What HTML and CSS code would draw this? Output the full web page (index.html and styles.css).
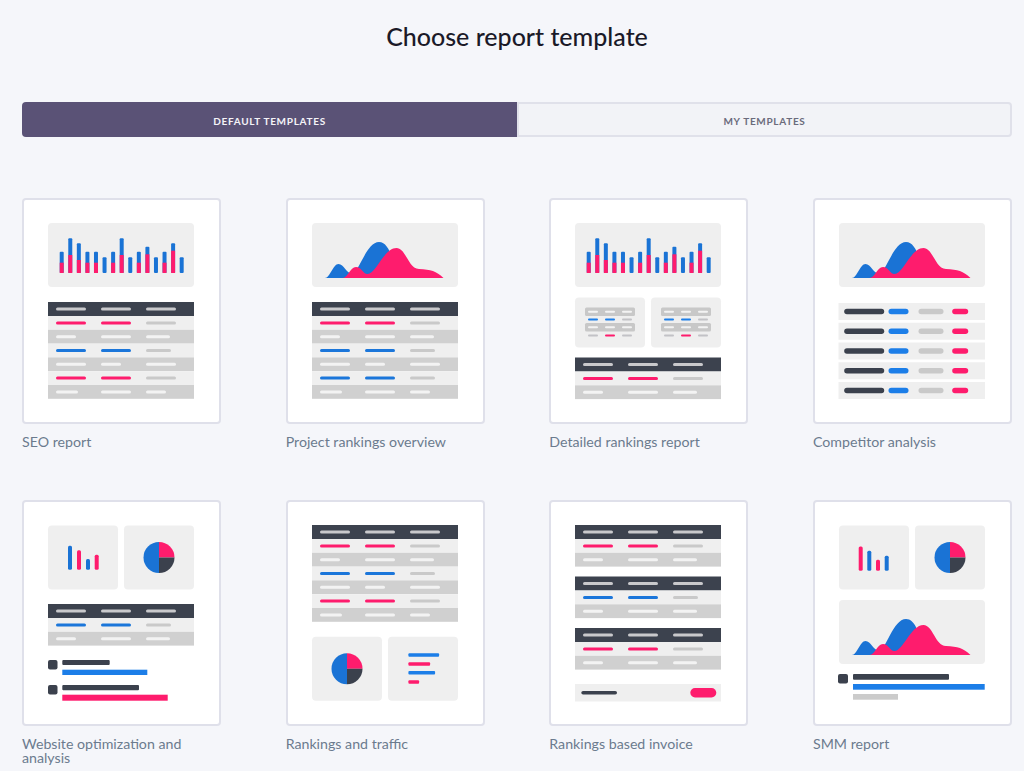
FILE: index.html
```html
<!DOCTYPE html>
<html lang="en">
<head>
<meta charset="utf-8">
<title>Choose report template</title>
<link rel="stylesheet" href="styles.css">
</head>
<body>
<svg class="defs" aria-hidden="true" width="0" height="0">
  <defs>
    <g id="hdr">
      <rect width="146" height="14" fill="#3c424e"/>
      <rect x="8" y="5.5" width="30" height="3" rx="1.5" fill="#c9c9cc"/>
      <rect x="53" y="5.5" width="30" height="3" rx="1.5" fill="#c9c9cc"/>
      <rect x="98" y="5.5" width="30" height="3" rx="1.5" fill="#c9c9cc"/>
    </g>
    <g id="rp">
      <rect width="146" height="13.8" fill="#efefef"/>
      <rect x="8" y="5.4" width="30" height="3" rx="1.5" fill="#fe1c6d"/>
      <rect x="53" y="5.4" width="30" height="3" rx="1.5" fill="#fe1c6d"/>
      <rect x="98" y="5.4" width="30" height="3" rx="1.5" fill="#c9c9c9"/>
    </g>
    <g id="rb">
      <rect width="146" height="13.8" fill="#efefef"/>
      <rect x="8" y="5.4" width="30" height="3" rx="1.5" fill="#1b76da"/>
      <rect x="53" y="5.4" width="30" height="3" rx="1.5" fill="#1b76da"/>
      <rect x="98" y="5.4" width="25" height="3" rx="1.5" fill="#c9c9c9"/>
    </g>
    <g id="rw1">
      <rect width="146" height="13.8" fill="#d0d0d0"/>
      <rect x="8" y="5.4" width="20" height="3" rx="1.5" fill="#f3f3f3"/>
      <rect x="53" y="5.4" width="30" height="3" rx="1.5" fill="#f3f3f3"/>
      <rect x="98" y="5.4" width="24" height="3" rx="1.5" fill="#f3f3f3"/>
    </g>
    <g id="rw2">
      <rect width="146" height="13.8" fill="#d0d0d0"/>
      <rect x="8" y="5.4" width="30" height="3" rx="1.5" fill="#f3f3f3"/>
      <rect x="53" y="5.4" width="20" height="3" rx="1.5" fill="#f3f3f3"/>
      <rect x="98" y="5.4" width="30" height="3" rx="1.5" fill="#f3f3f3"/>
    </g>
    <g id="rw3">
      <rect width="146" height="13.8" fill="#d0d0d0"/>
      <rect x="8" y="5.4" width="22" height="3" rx="1.5" fill="#f3f3f3"/>
      <rect x="53" y="5.4" width="30" height="3" rx="1.5" fill="#f3f3f3"/>
      <rect x="98" y="5.4" width="20" height="3" rx="1.5" fill="#f3f3f3"/>
    </g>
    <g id="bars">
      <rect x="26" y="25" width="146" height="64" rx="4" fill="#efefef"/>
      <g fill="#1a73d5">
        <rect x="37.7" y="53.7" width="4" height="21.3" rx="1"/>
        <rect x="46.27" y="40.3" width="4" height="34.7" rx="1"/>
        <rect x="54.84" y="45.3" width="4" height="29.7" rx="1"/>
        <rect x="63.41" y="53.7" width="4" height="21.3" rx="1"/>
        <rect x="71.98" y="53.7" width="4" height="21.3" rx="1"/>
        <rect x="80.55" y="59.3" width="4" height="15.7" rx="1"/>
        <rect x="89.12" y="53.7" width="4" height="21.3" rx="1"/>
        <rect x="97.69" y="40.3" width="4" height="34.7" rx="1"/>
        <rect x="106.26" y="59.3" width="4" height="15.7" rx="1"/>
        <rect x="114.83" y="53.7" width="4" height="21.3" rx="1"/>
        <rect x="123.4" y="48.7" width="4" height="26.3" rx="1"/>
        <rect x="131.97" y="59.3" width="4" height="15.7" rx="1"/>
        <rect x="140.54" y="53.7" width="4" height="21.3" rx="1"/>
        <rect x="149.11" y="45.3" width="4" height="29.7" rx="1"/>
        <rect x="157.68" y="59.3" width="4" height="15.7" rx="1"/>
      </g>
      <g fill="#fe1c6d">
        <rect x="37.7" y="64.7" width="4" height="10.3"/>
        <rect x="46.27" y="57" width="4" height="18"/>
        <rect x="54.84" y="62" width="4" height="13"/>
        <rect x="63.41" y="64.7" width="4" height="10.3"/>
        <rect x="71.98" y="64.7" width="4" height="10.3"/>
        <rect x="89.12" y="64.7" width="4" height="10.3"/>
        <rect x="97.69" y="57" width="4" height="18"/>
        <rect x="114.83" y="64.7" width="4" height="10.3"/>
        <rect x="123.4" y="56.3" width="4" height="18.7"/>
        <rect x="140.54" y="64.7" width="4" height="10.3"/>
        <rect x="149.11" y="52.7" width="4" height="22.3"/>
      </g>
    </g>
    <g id="area">
      <rect x="26" y="25" width="146" height="64" rx="4" fill="#efefef"/>
      <path d="M39,80 C44,80 47,66 52.5,66 C58,66 60,75.5 66,75.5 C73,75.5 80,44 93,44 C102,44 105,58 110,66 L113,80 Z" fill="#1a73d5"/>
      <path d="M56.5,80 C62,80 64,69 70,69 C75.5,69 77,76 81.5,76 C90,76 98,50 110.5,50 C120,50 122,70.5 133,71 C145,71.5 150,73 157.5,80 Z" fill="#fe1c6d"/>
    </g>
    <g id="pie">
      <path d="M0,-15.5 A15.5,15.5 0 0 0 0,15.5 Z" fill="#1a73d5"/>
      <path d="M0,0 L0,-15.5 A15.5,15.5 0 0 1 15.5,0 Z" fill="#fe1c6d"/>
      <path d="M0,0 L15.5,0 A15.5,15.5 0 0 1 0,15.5 Z" fill="#3b414d"/>
    </g>
    <g id="mini">
      <rect width="70" height="50" rx="4" fill="#efefef"/>
      <rect x="10" y="10" width="50" height="8.5" rx="1.5" fill="#c8c8c8"/>
      <rect x="13" y="13.25" width="10" height="2" rx="1" fill="#f3f3f3"/>
      <rect x="30" y="13.25" width="10" height="2" rx="1" fill="#f3f3f3"/>
      <rect x="47" y="13.25" width="10" height="2" rx="1" fill="#f3f3f3"/>
      <rect x="13" y="21" width="10" height="2" rx="1" fill="#1c7ee8"/>
      <rect x="30" y="21" width="10" height="2" rx="1" fill="#1c7ee8"/>
      <rect x="47" y="21" width="10" height="2" rx="1" fill="#c2c2c6"/>
      <rect x="10" y="25.5" width="50" height="8.5" rx="1.5" fill="#c8c8c8"/>
      <rect x="13" y="28.75" width="10" height="2" rx="1" fill="#f3f3f3"/>
      <rect x="30" y="28.75" width="10" height="2" rx="1" fill="#f3f3f3"/>
      <rect x="47" y="28.75" width="10" height="2" rx="1" fill="#f3f3f3"/>
      <rect x="13" y="37" width="10" height="2" rx="1" fill="#c2c2c6"/>
      <rect x="30" y="37" width="10" height="2" rx="1" fill="#fe1c6d"/>
      <rect x="47" y="37" width="10" height="2" rx="1" fill="#c2c2c6"/>
    </g>
    <g id="crow">
      <rect width="146.5" height="17" fill="#efefef"/>
      <rect x="5.7" y="5.75" width="40" height="5.5" rx="2.75" fill="#3b414d"/>
      <rect x="50" y="5.75" width="20" height="5.5" rx="2.75" fill="#1c7ee8"/>
      <rect x="80" y="5.75" width="25" height="5.5" rx="2.75" fill="#c9c9c9"/>
      <rect x="113.7" y="5.75" width="16" height="5.5" rx="2.75" fill="#fe1c6d"/>
    </g>
  </defs>
</svg>

<main class="page">
  <h1 class="title">Choose report template</h1>

  <div class="tabs">
    <button class="tab tab-active" type="button">DEFAULT TEMPLATES</button>
    <button class="tab tab-idle" type="button">MY TEMPLATES</button>
  </div>

  <ul class="grid">
    <li class="tpl">
      <div class="card">
        <svg class="thumb" viewBox="2 2 195 222">
          <use href="#bars"/>
          <use href="#hdr" x="26" y="104"/>
          <use href="#rp" x="26" y="118"/>
          <use href="#rw1" x="26" y="131.8"/>
          <use href="#rb" x="26" y="145.6"/>
          <use href="#rw2" x="26" y="159.4"/>
          <use href="#rp" x="26" y="173.2"/>
          <use href="#rw3" x="26" y="187"/>
        </svg>
      </div>
      <p class="label">SEO report</p>
    </li>

    <li class="tpl">
      <div class="card">
        <svg class="thumb" viewBox="2 2 195 222">
          <use href="#area"/>
          <use href="#hdr" x="26" y="104"/>
          <use href="#rp" x="26" y="118"/>
          <use href="#rw1" x="26" y="131.8"/>
          <use href="#rb" x="26" y="145.6"/>
          <use href="#rw2" x="26" y="159.4"/>
          <use href="#rb" x="26" y="173.2"/>
          <use href="#rw3" x="26" y="187"/>
        </svg>
      </div>
      <p class="label">Project rankings overview</p>
    </li>

    <li class="tpl">
      <div class="card">
        <svg class="thumb" viewBox="2 2 195 222">
          <use href="#bars"/>
          <use href="#mini" x="26" y="99.5"/>
          <use href="#mini" x="102" y="99.5"/>
          <use href="#hdr" x="26" y="159.5"/>
          <use href="#rp" x="26" y="173.5"/>
          <use href="#rw1" x="26" y="187.3"/>
        </svg>
      </div>
      <p class="label">Detailed rankings report</p>
    </li>

    <li class="tpl">
      <div class="card">
        <svg class="thumb" viewBox="2 2 195 222">
          <use href="#area"/>
          <use href="#crow" x="25.5" y="105"/>
          <use href="#crow" x="25.5" y="124.75"/>
          <use href="#crow" x="25.5" y="144.5"/>
          <use href="#crow" x="25.5" y="164.25"/>
          <use href="#crow" x="25.5" y="184"/>
        </svg>
      </div>
      <p class="label">Competitor analysis</p>
    </li>

    <li class="tpl">
      <div class="card">
        <svg class="thumb" viewBox="2 2 195 222">
          <rect x="26" y="25.5" width="70" height="64" rx="4" fill="#efefef"/>
          <rect x="102" y="25.5" width="70" height="64" rx="4" fill="#efefef"/>
          <rect x="46" y="45.7" width="4" height="24" rx="1.5" fill="#1a73d5"/>
          <rect x="55" y="50.3" width="4" height="19.4" rx="1.5" fill="#fe1c6d"/>
          <rect x="64" y="59" width="4" height="10.7" rx="1.5" fill="#1a73d5"/>
          <rect x="72.7" y="54.7" width="4" height="15" rx="1.5" fill="#fe1c6d"/>
          <use href="#pie" x="137" y="57.5"/>
          <use href="#hdr" x="26" y="104"/>
          <use href="#rb" x="26" y="118"/>
          <use href="#rw1" x="26" y="131.8"/>
          <rect x="26" y="160" width="9.5" height="9.5" rx="2" fill="#3b414d"/>
          <rect x="40.3" y="160" width="47.4" height="5" rx="1" fill="#3b414d"/>
          <rect x="40.3" y="169.7" width="85" height="5.3" fill="#1c7ee8"/>
          <rect x="26" y="185" width="9.5" height="9.5" rx="2" fill="#3b414d"/>
          <rect x="40.3" y="185" width="76.7" height="5.3" rx="1" fill="#3b414d"/>
          <rect x="40.3" y="194.7" width="105.4" height="6" fill="#fe1c6d"/>
        </svg>
      </div>
      <p class="label">Website optimization and analysis</p>
    </li>

    <li class="tpl">
      <div class="card">
        <svg class="thumb" viewBox="2 2 195 222">
          <use href="#hdr" x="26" y="25"/>
          <use href="#rp" x="26" y="39"/>
          <use href="#rw1" x="26" y="52.8"/>
          <use href="#rb" x="26" y="66.6"/>
          <use href="#rw2" x="26" y="80.4"/>
          <use href="#rp" x="26" y="94.2"/>
          <use href="#rw3" x="26" y="108"/>
          <rect x="26" y="136.7" width="70" height="64" rx="4" fill="#efefef"/>
          <rect x="102" y="136.7" width="70" height="64" rx="4" fill="#efefef"/>
          <use href="#pie" x="61" y="168.7"/>
          <rect x="122.4" y="153.2" width="30.7" height="3.6" rx="1" fill="#1c7ee8"/>
          <rect x="122.4" y="162.2" width="21.7" height="3.6" rx="1" fill="#fe1c6d"/>
          <rect x="122.4" y="170.9" width="26.7" height="3.6" rx="1" fill="#1c7ee8"/>
          <rect x="122.4" y="180.2" width="10.7" height="3.6" rx="1" fill="#fe1c6d"/>
        </svg>
      </div>
      <p class="label">Rankings and traffic</p>
    </li>

    <li class="tpl">
      <div class="card">
        <svg class="thumb" viewBox="2 2 195 222">
          <use href="#hdr" x="26" y="25"/>
          <use href="#rp" x="26" y="39"/>
          <use href="#rw1" x="26" y="52.8"/>
          <use href="#hdr" x="26" y="76.5"/>
          <use href="#rb" x="26" y="90.5"/>
          <use href="#rw1" x="26" y="104.3"/>
          <use href="#hdr" x="26" y="128"/>
          <use href="#rp" x="26" y="142"/>
          <use href="#rw1" x="26" y="155.8"/>
          <rect x="26" y="184" width="146" height="17.5" fill="#efefef"/>
          <rect x="32.3" y="191" width="35.7" height="3.5" rx="1.75" fill="#3b414d"/>
          <rect x="141.3" y="188" width="26" height="9.4" rx="4.7" fill="#fe1c6d"/>
        </svg>
      </div>
      <p class="label">Rankings based invoice</p>
    </li>

    <li class="tpl">
      <div class="card">
        <svg class="thumb" viewBox="2 2 195 222">
          <rect x="26" y="25.5" width="70" height="64" rx="4" fill="#efefef"/>
          <rect x="102" y="25.5" width="70" height="64" rx="4" fill="#efefef"/>
          <rect x="45.7" y="46.4" width="4" height="24.3" rx="1.5" fill="#fe1c6d"/>
          <rect x="54.3" y="50.7" width="4" height="20" rx="1.5" fill="#1a73d5"/>
          <rect x="63" y="59.7" width="4" height="11" rx="1.5" fill="#fe1c6d"/>
          <rect x="71.7" y="55.7" width="4" height="15" rx="1.5" fill="#1a73d5"/>
          <use href="#pie" x="137" y="57.5"/>
          <use href="#area" y="75"/>
          <rect x="25" y="174" width="10" height="9.4" rx="2" fill="#3b414d"/>
          <rect x="40" y="174" width="96" height="5.7" rx="1" fill="#3b414d"/>
          <rect x="40" y="184" width="131.7" height="5.7" fill="#1c7ee8"/>
          <rect x="40" y="194" width="45" height="5.7" fill="#cbcbcb"/>
        </svg>
      </div>
      <p class="label">SMM report</p>
    </li>
  </ul>
</main>
</body>
</html>
```

FILE: styles.css
```css
html, body {
  margin: 0;
  padding: 0;
}

body {
  background: #f5f6fa;
  font-family: Lato, "Open Sans", "Liberation Sans", sans-serif;
  color: #1c1d2b;
}

.defs {
  display: block;
  width: 0;
  height: 0;
  overflow: hidden;
}

.page {
  padding: 0 12px 0 22px;
}

.title {
  margin: 0;
  padding-top: 21px;
  font-size: 25px;
  line-height: 30px;
  font-weight: 500;
  text-align: center;
  color: #1b1a28;
}

.tabs {
  display: flex;
  height: 35px;
  margin-top: 51px;
}

.tab {
  box-sizing: border-box;
  flex: 0 0 50%;
  margin: 0;
  padding: 2px 0 0;
  font-family: inherit;
  font-size: 10px;
  font-weight: 700;
  letter-spacing: 0.7px;
  cursor: pointer;
}

.tab-active {
  background: #5a5276;
  color: #f4f3f8;
  border: none;
  border-radius: 4px 0 0 4px;
}

.tab-idle {
  background: #f2f3f7;
  color: #6b6b7c;
  border: 2px solid #e0e1ea;
  border-radius: 0 4px 4px 0;
}

.grid {
  display: grid;
  grid-template-columns: repeat(4, 199px);
  justify-content: space-between;
  row-gap: 37px;
  margin: 61px 0 0;
  padding: 0;
  list-style: none;
}

.tpl {
  margin: 0;
}

.card {
  box-sizing: border-box;
  height: 226px;
  background: #ffffff;
  border: 2px solid #dfe0ea;
  border-radius: 4px;
}

.thumb {
  display: block;
  width: 195px;
  height: 222px;
}

.label {
  margin: 11px 0 0;
  min-height: 28px;
  font-size: 14.2px;
  line-height: 14px;
  color: #6b7b8e;
}
```
